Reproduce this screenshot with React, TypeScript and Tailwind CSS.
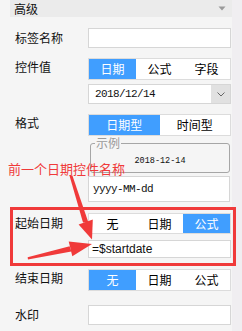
import React from "react";

const BLUE = "bg-[#409eff]";

function Seg({ items, active }: { items: string[]; active: number }) {
  return (
    <div className="flex h-full border border-[#dcdcdc] bg-white">
      {items.map((t, i) => (
        <div
          key={t}
          className={`flex-1 flex items-center justify-center text-[12px] leading-none ${
            i === active ? `${BLUE} text-white` : "text-black"
          }`}
        >
          {t}
        </div>
      ))}
    </div>
  );
}

function Label({ children, center }: { children: React.ReactNode; center?: boolean }) {
  return (
    <div
      className={`w-[88px] pl-[15px] text-[12px] leading-[16px] text-[#111] ${
        center ? "flex items-center" : "pt-[1px]"
      }`}
    >
      {children}
    </div>
  );
}

export default function App() {
  return (
    <div
      className="relative w-[242px] h-[331px] bg-[#f5f5f5] flex overflow-hidden"
      style={{ fontFamily: '"Noto Sans CJK SC", "Liberation Sans", sans-serif' }}
    >
      <div className="w-[232px] flex flex-col">
        {/* header */}
        <div className="ml-[10px] h-[17px] bg-[#ebebeb] flex items-center justify-between pl-[4px] pr-[6px]">
          <span className="text-[12px] leading-none text-[#111]">高级</span>
          <svg width="8" height="5" viewBox="0 0 8 5">
            <path d="M0.5 0.5 L7.5 0.5 L4 4.5 Z" fill="#9a9a9a" />
          </svg>
        </div>

        {/* 标签名称 */}
        <div className="flex mt-[11px] h-[20px]">
          <Label center>标签名称</Label>
          <div className="w-[143px] h-full border border-[#d6d6d6] bg-white" />
        </div>

        {/* 控件值 */}
        <div className="flex mt-[10px] h-[22px]">
          <Label>控件值</Label>
          <div className="w-[143px] h-full">
            <Seg items={["日期", "公式", "字段"]} active={0} />
          </div>
        </div>
        <div className="flex mt-[4px] h-[20px]">
          <div className="w-[88px]" />
          <div className="w-[143px] h-full border border-[#d6d6d6] bg-white flex">
            <div
              className="flex-1 flex items-center pl-[6px] text-[11px] tracking-[-0.6px] text-[#111]"
              style={{ fontFamily: '"Liberation Mono", monospace' }}
            >
              2018/12/14
            </div>
            <div className="w-[19px] h-full bg-[#e1e1e1] flex items-center justify-center">
              <svg width="8" height="5" viewBox="0 0 8 5">
                <path d="M0.5 0.5 L4 4 L7.5 0.5" fill="none" stroke="#666" strokeWidth="1" />
              </svg>
            </div>
          </div>
        </div>

        {/* 格式 */}
        <div className="flex mt-[10px] h-[22px]">
          <Label>格式</Label>
          <div className="w-[143px] h-full">
            <Seg items={["日期型", "时间型"]} active={0} />
          </div>
        </div>
        <div className="flex mt-[7px] h-[30px]">
          <div className="w-[90px]" />
          <div className="relative w-[140px] h-full border border-[#a6a6a6] rounded-[3px] flex items-center justify-center pt-[6px]">
            <span className="absolute left-[4px] top-[-8px] px-[1px] bg-[#f5f5f5] text-[12px] leading-[14px] text-[#9a9a9a]">
              示例
            </span>
            <span
              className="text-[8.5px] text-[#111]"
              style={{ fontFamily: '"Liberation Mono", monospace' }}
            >
              2018-12-14
            </span>
          </div>
        </div>
        <div className="flex mt-[3px] h-[26px]">
          <div className="w-[88px]" />
          <div
            className="w-[142px] h-full border border-[#d6d6d6] bg-white flex items-center pl-[4px] text-[11px] tracking-[-0.6px] text-[#111]"
            style={{ fontFamily: '"Liberation Mono", monospace' }}
          >
            yyyy-MM-dd
          </div>
        </div>

        {/* 起始日期 */}
        <div className="flex mt-[11px] h-[21px]">
          <div className="w-[88px] pl-[15px] pt-[2px] text-[12px] leading-[16px] text-[#111]">起始日期</div>
          <div className="w-[143px] h-full">
            <Seg items={["无", "日期", "公式"]} active={2} />
          </div>
        </div>
        <div className="flex mt-[6px] h-[18px]">
          <div className="w-[88px]" />
          <div
            className="w-[143px] h-full border border-[#d6d6d6] bg-white flex items-center pl-[3px] text-[12px] text-[#111]"
            style={{ fontFamily: '"Liberation Sans", sans-serif' }}
          >
            =$startdate
          </div>
        </div>

        {/* 结束日期 */}
        <div className="flex mt-[11px] h-[22px]">
          <Label>结束日期</Label>
          <div className="w-[143px] h-full">
            <Seg items={["无", "日期", "公式"]} active={0} />
          </div>
        </div>

        {/* 水印 */}
        <div className="flex mt-[14px] h-[20px]">
          <Label center>水印</Label>
          <div className="w-[143px] h-full border border-[#d6d6d6] bg-white" />
        </div>
      </div>
      <div className="w-[10px] bg-[#f0eef1]" />

      {/* annotations */}
      <div className="absolute left-[10px] top-[207px] w-[226px] h-[59px] border-[3px] border-[#f03a3a] pointer-events-none" />
      <div className="absolute left-[8px] top-[161px] text-[13px] leading-[16px] text-[#f03a3a] pointer-events-none">
        前一个日期控件名称
      </div>
      <svg className="absolute left-0 top-0 pointer-events-none" width="242" height="331" viewBox="0 0 242 331">
        <polygon points="69.6,176 72.4,175.5 88.4,222.5 83,222.4" fill="#f03a3a" />
        <polygon points="92,239.5 78.6,224.6 92.8,219.4" fill="#f03a3a" />
        <polygon points="28,259.5 27.6,257.2 69.6,246.2 71.4,251.4" fill="#f03a3a" />
        <polygon points="92,244 72.3,256.2 68.7,241.4" fill="#f03a3a" />
      </svg>
    </div>
  );
}
